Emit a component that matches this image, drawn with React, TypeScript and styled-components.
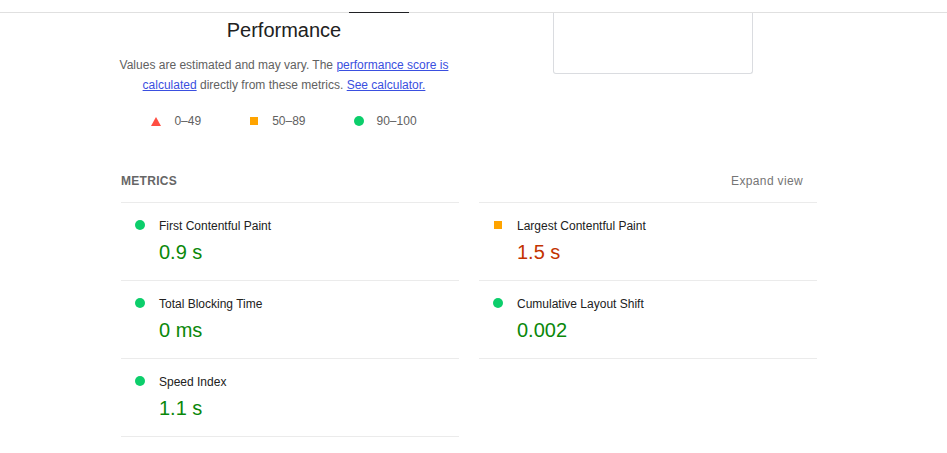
import styled, { createGlobalStyle } from "styled-components";

const GlobalStyle = createGlobalStyle`
  html, body {
    margin: 0;
    padding: 0;
    background: #fff;
  }
  body {
    font-family: "Liberation Sans", Arial, sans-serif;
    color: #212121;
  }
`;

type Rating = "pass" | "average" | "fail";

const valueColors: Record<Rating, string> = {
	pass: "#0a880a",
	average: "#c33300",
	fail: "#cc0000",
};

const TopBar = styled.div`
  box-sizing: border-box;
  height: 13px;
  padding-left: 349px;
  border-bottom: 1px solid #e0e0e0;
  display: flex;
`;

const TabIndicator = styled.div`
  align-self: flex-end;
  width: 60px;
  height: 1px;
  margin-bottom: -1px;
  background: #202124;
`;

const Header = styled.section`
  display: flex;
  padding-left: 117px;
`;

const Gauge = styled.div`
  width: 334px;
  text-align: center;
`;

const Title = styled.h2`
  margin: 5px 0 0;
  font-size: 20px;
  line-height: 24px;
  font-weight: 400;
  color: #212121;
`;

const Description = styled.p`
  margin: 13px 0 0;
  font-size: 12px;
  line-height: 20px;
  color: #616161;

  a {
    color: #3a4fe0;
    text-decoration: underline;
  }
`;

const Legend = styled.div`
  margin-top: 16px;
  display: flex;
  justify-content: center;
  gap: 48px;
`;

const LegendItem = styled.span`
  display: flex;
  align-items: center;
  gap: 13px;
  font-size: 12px;
  line-height: 20px;
  color: #616161;
`;

const Shape = styled.span<{ $kind: Rating }>`
  display: inline-block;
  flex: none;
  ${({ $kind }) =>
		$kind === "pass"
			? "width: 10px; height: 10px; border-radius: 50%; background: #0cce6b;"
			: $kind === "average"
				? "width: 8px; height: 8px; margin: 1px; background: #ffa400;"
				: "width: 0; height: 0; border-left: 5px solid transparent; border-right: 5px solid transparent; border-bottom: 9px solid #ff4e42;"}
`;

const ScreenshotFrame = styled.div`
  box-sizing: border-box;
  margin-left: 102px;
  width: 200px;
  height: 61px;
  border: 1px solid #dadce0;
  border-top: none;
  border-radius: 0 0 3px 3px;
`;

const Metrics = styled.section`
  width: 696px;
  margin: 40px 0 0 121px;
`;

const MetricsHeader = styled.div`
  display: flex;
  justify-content: space-between;
  align-items: center;
  height: 20px;
  margin-bottom: 11px;
`;

const GroupTitle = styled.span`
  font-size: 12px;
  line-height: 20px;
  font-weight: 700;
  letter-spacing: 0.3px;
  color: #666;
`;

const ExpandToggle = styled.span`
  padding-right: 14px;
  font-size: 12px;
  line-height: 20px;
  letter-spacing: 0.35px;
  color: #757575;
`;

const MetricGrid = styled.div`
  display: grid;
  grid-template-columns: 1fr 1fr;
  column-gap: 20px;
  align-items: start;
`;

const Metric = styled.div`
  display: grid;
  grid-template-columns: 10px 1fr;
  column-gap: 14px;
  padding: 13px 0 12px 14px;
  border-bottom: 1px solid #ebebeb;

  &:nth-child(-n + 2) {
    border-top: 1px solid #ebebeb;
  }
`;

const MetricIcon = styled.div`
  padding-top: 4px;
  display: flex;
  justify-content: center;
  align-items: flex-start;
`;

const MetricLabel = styled.div`
  font-size: 12px;
  line-height: 20px;
  color: #212121;
`;

const MetricValue = styled.div<{ $rating: Rating }>`
  grid-column: 2;
  font-size: 20px;
  line-height: 32px;
  color: ${({ $rating }) => valueColors[$rating]};
`;

const metrics: { label: string; value: string; rating: Rating }[] = [
	{ label: "First Contentful Paint", value: "0.9 s", rating: "pass" },
	{ label: "Largest Contentful Paint", value: "1.5 s", rating: "average" },
	{ label: "Total Blocking Time", value: "0 ms", rating: "pass" },
	{ label: "Cumulative Layout Shift", value: "0.002", rating: "pass" },
	{ label: "Speed Index", value: "1.1 s", rating: "pass" },
];

const App = () => {
	return (
		<>
			<GlobalStyle />
			<TopBar>
				<TabIndicator />
			</TopBar>
			<Header>
				<Gauge>
					<Title>Performance</Title>
					<Description>
						Values are estimated and may vary. The{" "}
						<a href="#score">performance score is calculated</a> directly from
						these metrics. <a href="#calc">See calculator.</a>
					</Description>
					<Legend>
						<LegendItem>
							<Shape $kind="fail" />
							0–49
						</LegendItem>
						<LegendItem>
							<Shape $kind="average" />
							50–89
						</LegendItem>
						<LegendItem>
							<Shape $kind="pass" />
							90–100
						</LegendItem>
					</Legend>
				</Gauge>
				<ScreenshotFrame />
			</Header>
			<Metrics>
				<MetricsHeader>
					<GroupTitle>METRICS</GroupTitle>
					<ExpandToggle>Expand view</ExpandToggle>
				</MetricsHeader>
				<MetricGrid>
					{metrics.map((m) => (
						<Metric key={m.label}>
							<MetricIcon>
								<Shape $kind={m.rating} />
							</MetricIcon>
							<MetricLabel>{m.label}</MetricLabel>
							<MetricValue $rating={m.rating}>{m.value}</MetricValue>
						</Metric>
					))}
				</MetricGrid>
			</Metrics>
		</>
	);
};

export default App;
